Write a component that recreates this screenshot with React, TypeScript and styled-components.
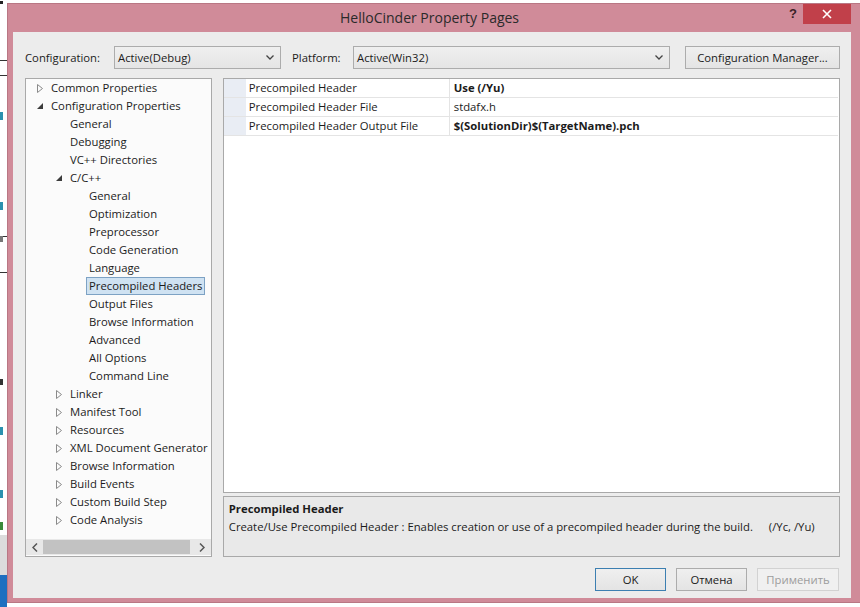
import React from "react";
import styled, { createGlobalStyle } from "styled-components";

const GlobalStyle = createGlobalStyle`
  html, body {
    margin: 0;
    padding: 0;
    background: #ffffff;
  }
  body {
    font-family: "Segoe UI", "Open Sans", "Noto Sans", sans-serif;
    font-size: 11.3px;
    color: #1b1b1b;
  }
`;

interface TreeItem {
  label: string;
  level: number;
  arrow?: "open" | "closed";
  selected?: boolean;
}

const treeItems: TreeItem[] = [
  { label: "Common Properties", level: 0, arrow: "closed" },
  { label: "Configuration Properties", level: 0, arrow: "open" },
  { label: "General", level: 1 },
  { label: "Debugging", level: 1 },
  { label: "VC++ Directories", level: 1 },
  { label: "C/C++", level: 1, arrow: "open" },
  { label: "General", level: 2 },
  { label: "Optimization", level: 2 },
  { label: "Preprocessor", level: 2 },
  { label: "Code Generation", level: 2 },
  { label: "Language", level: 2 },
  { label: "Precompiled Headers", level: 2, selected: true },
  { label: "Output Files", level: 2 },
  { label: "Browse Information", level: 2 },
  { label: "Advanced", level: 2 },
  { label: "All Options", level: 2 },
  { label: "Command Line", level: 2 },
  { label: "Linker", level: 1, arrow: "closed" },
  { label: "Manifest Tool", level: 1, arrow: "closed" },
  { label: "Resources", level: 1, arrow: "closed" },
  { label: "XML Document Generator", level: 1, arrow: "closed" },
  { label: "Browse Information", level: 1, arrow: "closed" },
  { label: "Build Events", level: 1, arrow: "closed" },
  { label: "Custom Build Step", level: 1, arrow: "closed" },
  { label: "Code Analysis", level: 1, arrow: "closed" },
];

const properties = [
  { name: "Precompiled Header", value: "Use (/Yu)", bold: true },
  { name: "Precompiled Header File", value: "stdafx.h", bold: false },
  { name: "Precompiled Header Output File", value: "$(SolutionDir)$(TargetName).pch", bold: true },
];

// bits of the code editor peeking out from behind the dialog
const editorMarks = [
  { top: 1, color: "#222", h: 3 },
  { top: 112, color: "#2b91af", h: 8 },
  { top: 202, color: "#2b91af", h: 8 },
  { top: 236, color: "#777", h: 6 },
  { top: 379, color: "#333", h: 6 },
  { top: 427, color: "#2b91af", h: 8 },
  { top: 490, color: "#2b91af", h: 8 },
  { top: 522, color: "#3a8a3a", h: 8 },
];

const App = () => {
  return (
    <>
      <GlobalStyle />
      <Desktop>
        <EditorStrip>
          <EditorRule style={{ top: 60 }} />
          <EditorRule style={{ top: 75 }} />
          <EditorRule style={{ top: 236 }} />
          <EditorRule style={{ top: 272 }} />
          {editorMarks.map((m, i) => (
            <EditorMark key={i} style={{ top: m.top, height: m.h, background: m.color }} />
          ))}
          <EditorBand />
          <TaskBand />
        </EditorStrip>
        <Window>
          <TitleBar>
            <span />
            <Title>HelloCinder Property Pages</Title>
            <TitleControls>
              <HelpGlyph>?</HelpGlyph>
              <CloseButton>
                <svg width="10" height="10" viewBox="0 0 10 10">
                  <path d="M1 1 L9 9 M9 1 L1 9" stroke="#fff" strokeWidth="1.6" />
                </svg>
              </CloseButton>
            </TitleControls>
          </TitleBar>
          <Client>
            <TopRow>
              <FieldLabel $width={89}>Configuration:</FieldLabel>
              <Combo $width={167}>
                <span>Active(Debug)</span>
                <Chevron />
              </Combo>
              <FieldLabel $width={61} $indent={11}>Platform:</FieldLabel>
              <Combo $width={317}>
                <span>Active(Win32)</span>
                <Chevron />
              </Combo>
              <Spacer />
              <PushButton $width={155}>Configuration Manager...</PushButton>
            </TopRow>
            <Main>
              <TreePanel>
                <TreeRows>
                  {treeItems.map((item, i) => (
                    <TreeRow key={i} $level={item.level}>
                      <ArrowBox>
                        {item.arrow === "closed" && (
                          <svg width="6" height="9" viewBox="0 0 6 9">
                            <path d="M0.5 0.5 L5.5 4.5 L0.5 8.5 Z" fill="none" stroke="#8a8a8a" strokeWidth="1" />
                          </svg>
                        )}
                        {item.arrow === "open" && (
                          <svg width="6" height="6" viewBox="0 0 6 6">
                            <path d="M6 0 L6 6 L0 6 Z" fill="#3c3c3c" />
                          </svg>
                        )}
                      </ArrowBox>
                      <TreeLabel $selected={item.selected}>{item.label}</TreeLabel>
                    </TreeRow>
                  ))}
                </TreeRows>
                <HScroll>
                  <ScrollArrow>
                    <svg width="6" height="9" viewBox="0 0 6 9">
                      <path d="M5 0.5 L1 4.5 L5 8.5" fill="none" stroke="#555" strokeWidth="1.5" />
                    </svg>
                  </ScrollArrow>
                  <ScrollTrack>
                    <ScrollThumb />
                  </ScrollTrack>
                  <ScrollArrow>
                    <svg width="6" height="9" viewBox="0 0 6 9">
                      <path d="M1 0.5 L5 4.5 L1 8.5" fill="none" stroke="#555" strokeWidth="1.5" />
                    </svg>
                  </ScrollArrow>
                </HScroll>
              </TreePanel>
              <RightColumn>
                <Grid>
                  {properties.map((p) => (
                    <GridRow key={p.name}>
                      <Gutter />
                      <NameCell>{p.name}</NameCell>
                      <ValueCell $bold={p.bold}>{p.value}</ValueCell>
                    </GridRow>
                  ))}
                </Grid>
                <Description>
                  <DescTitle>Precompiled Header</DescTitle>
                  <DescText>
                    <span>
                      Create/Use Precompiled Header : Enables creation or use of a precompiled header during the build.
                    </span>
                    <span>(/Yc, /Yu)</span>
                  </DescText>
                </Description>
              </RightColumn>
            </Main>
            <ButtonRow>
              <PushButton $width={71} $default>OK</PushButton>
              <PushButton $width={71}>Отмена</PushButton>
              <PushButton $width={82} $disabled>Применить</PushButton>
            </ButtonRow>
          </Client>
        </Window>
      </Desktop>
    </>
  );
};

export default App;

const Chevron = () => (
  <svg width="8" height="5" viewBox="0 0 8 5">
    <path d="M0.5 0.5 L4 4 L7.5 0.5" fill="none" stroke="#444" strokeWidth="1.3" />
  </svg>
);

const Desktop = styled.div`
  width: 860px;
  height: 607px;
  display: flex;
  overflow: hidden;
  background: #ffffff;
`;

const EditorStrip = styled.div`
  position: relative;
  width: 7px;
  flex-shrink: 0;
  display: flex;
  flex-direction: column;
  overflow: hidden;
  background: #ffffff;
`;

const EditorRule = styled.div`
  position: absolute;
  left: 0;
  right: 0;
  height: 1px;
  background: #333;
`;

const EditorMark = styled.div`
  position: absolute;
  left: 0;
  width: 3px;
`;

const EditorBand = styled.div`
  margin-top: 535px;
  height: 40px;
  background: #dcdcdc;
  flex-shrink: 0;
`;

const TaskBand = styled.div`
  flex: 1;
  background: #1e6fc0;
`;

const Window = styled.div`
  width: 853px;
  height: 600px;
  margin-top: 3px;
  flex-shrink: 0;
  box-sizing: border-box;
  background: #d08b99;
  border: 1px solid #b97784;
  border-right: none;
  display: flex;
  flex-direction: column;
`;

const TitleBar = styled.div`
  height: 28px;
  display: grid;
  grid-template-columns: 1fr auto 1fr;
  align-items: start;
  padding-right: 9px;
`;

const Title = styled.div`
  font-size: 14px;
  color: #2a2a2a;
  line-height: 28px;
`;

const TitleControls = styled.div`
  justify-self: end;
  display: flex;
  align-items: start;
  gap: 6px;
`;

const HelpGlyph = styled.span`
  font-family: "Liberation Sans", sans-serif;
  font-weight: bold;
  font-size: 13px;
  color: #3a1f26;
  line-height: 20px;
`;

const CloseButton = styled.div`
  width: 48px;
  height: 20px;
  background: #c1404a;
  display: flex;
  align-items: center;
  justify-content: center;
`;

const Client = styled.div`
  flex: 1;
  margin: 0 9px 5px 5px;
  background: #ececec;
  padding: 14px 11px 7px 12px;
  display: flex;
  flex-direction: column;
  box-sizing: border-box;
`;

const TopRow = styled.div`
  height: 23px;
  display: flex;
  align-items: center;
`;

const FieldLabel = styled.div<{ $width: number; $indent?: number }>`
  width: ${(p) => p.$width}px;
  margin-left: ${(p) => p.$indent || 0}px;
  flex-shrink: 0;
  white-space: nowrap;
`;

const Combo = styled.div<{ $width: number }>`
  width: ${(p) => p.$width}px;
  height: 23px;
  box-sizing: border-box;
  border: 1px solid #acacac;
  background: linear-gradient(#efefef, #e5e5e5);
  display: flex;
  align-items: center;
  justify-content: space-between;
  padding: 0 6px 0 3px;
  flex-shrink: 0;
`;

const Spacer = styled.div`
  flex: 1;
`;

const PushButton = styled.div<{ $width: number; $default?: boolean; $disabled?: boolean }>`
  width: ${(p) => p.$width}px;
  height: 23px;
  box-sizing: border-box;
  flex-shrink: 0;
  display: flex;
  align-items: center;
  justify-content: center;
  white-space: nowrap;
  border: 1px solid ${(p) => (p.$default ? "#3c7fb1" : p.$disabled ? "#d2d2d2" : "#acacac")};
  background: ${(p) => (p.$disabled ? "#f0f0f0" : "linear-gradient(#efefef, #e4e4e4)")};
  color: ${(p) => (p.$disabled ? "#9c9c9c" : "#1b1b1b")};
`;

const Main = styled.div`
  margin-top: 9px;
  display: flex;
  gap: 11px;
  height: 479px;
`;

const TreePanel = styled.div`
  width: 187px;
  height: 479px;
  box-sizing: border-box;
  border: 1px solid #a9a9a9;
  background: #fbfbfb;
  display: flex;
  flex-direction: column;
  overflow: hidden;
`;

const TreeRows = styled.div`
  flex: 1;
  overflow: hidden;
`;

const TreeRow = styled.div<{ $level: number }>`
  height: 18px;
  display: flex;
  align-items: center;
  padding-left: ${(p) => 10 + p.$level * 19}px;
  white-space: nowrap;
`;

const ArrowBox = styled.div`
  width: 15px;
  flex-shrink: 0;
  display: flex;
  align-items: center;
  justify-content: flex-start;
  padding-left: 1px;
  box-sizing: border-box;
`;

const TreeLabel = styled.span<{ $selected?: boolean }>`
  padding: 0 2px;
  margin-left: -3px;
  height: 18px;
  line-height: 16px;
  box-sizing: border-box;
  border: 1px solid ${(p) => (p.$selected ? "#7da2c4" : "transparent")};
  background: ${(p) => (p.$selected ? "#cfe2f2" : "transparent")};
`;

const HScroll = styled.div`
  height: 16px;
  margin: 0 0 1px 0;
  display: flex;
  background: #e8e8e8;
`;

const ScrollArrow = styled.div`
  width: 17px;
  display: flex;
  align-items: center;
  justify-content: center;
`;

const ScrollTrack = styled.div`
  flex: 1;
  display: flex;
  padding: 1px 0;
`;

const ScrollThumb = styled.div`
  width: 147px;
  background: #c2c2c2;
`;

const RightColumn = styled.div`
  width: 618px;
  display: flex;
  flex-direction: column;
  gap: 3px;
`;

const Grid = styled.div`
  flex: 1;
  box-sizing: border-box;
  border: 1px solid #a9a9a9;
  background: #ffffff;
  padding-right: 1px;
`;

const GridRow = styled.div`
  height: 19px;
  display: flex;
  border-bottom: 1px solid #e4e4e4;
  box-sizing: border-box;
`;

const Gutter = styled.div`
  width: 22px;
  background: #e9edf4;
`;

const NameCell = styled.div`
  width: 204px;
  padding-left: 3px;
  box-sizing: border-box;
  border-right: 1px solid #e4e4e4;
  line-height: 18px;
  white-space: nowrap;
`;

const ValueCell = styled.div<{ $bold?: boolean }>`
  flex: 1;
  padding-left: 4px;
  line-height: 18px;
  font-weight: ${(p) => (p.$bold ? 700 : 400)};
  white-space: nowrap;
`;

const Description = styled.div`
  height: 61px;
  box-sizing: border-box;
  border: 1px solid #a9a9a9;
  background: #e9e9e9;
  padding: 3px 0 0 5px;
`;

const DescTitle = styled.div`
  font-weight: 700;
  line-height: 18px;
`;

const DescText = styled.div`
  display: flex;
  gap: 16px;
  line-height: 18px;
  white-space: nowrap;
`;

const ButtonRow = styled.div`
  margin-top: 11px;
  display: flex;
  justify-content: flex-end;
  gap: 10px;
  padding-right: 1px;
`;
